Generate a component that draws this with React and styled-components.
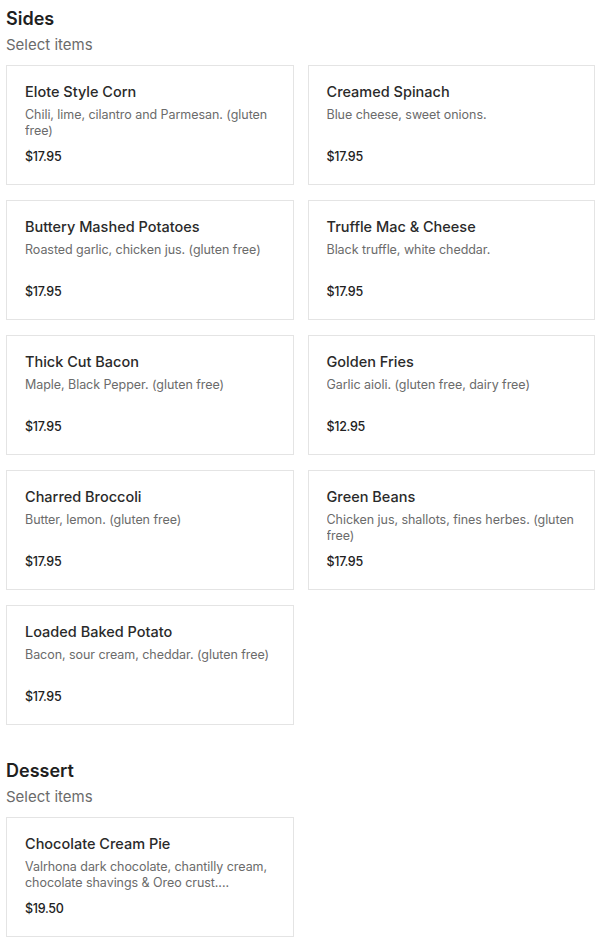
import styled, { createGlobalStyle } from 'styled-components';

const GlobalStyle = createGlobalStyle`
  body {
    margin: 0;
    background: #ffffff;
    font-family: Inter, "Liberation Sans", Arial, sans-serif;
    color: #222222;
  }
`;

const Page = styled.div`
  padding: 7px 8px 0 6px;
  display: flex;
  flex-direction: column;
  gap: 34px;
`;

const Section = styled.section`
  display: flex;
  flex-direction: column;
`;

const SectionTitle = styled.h2`
  margin: 0;
  font-size: 18px;
  line-height: 24px;
  font-weight: 600;
  color: #1f1f1f;
`;

const SectionSub = styled.div`
  font-size: 15px;
  line-height: 20px;
  color: #6b6b6b;
  margin-top: 4px;
  margin-bottom: 10px;
`;

const Grid = styled.div`
  display: grid;
  grid-template-columns: 1fr 1fr;
  column-gap: 14px;
  row-gap: 15px;
`;

const Card = styled.div`
  box-sizing: border-box;
  height: 120px;
  border: 1px solid #e4e4e4;
  padding: 16px 14px 0 18px;
  display: flex;
  flex-direction: column;
`;

const ItemName = styled.div`
  font-size: 14.5px;
  line-height: 20px;
  font-weight: 500;
  color: #2a2a2a;
`;

const ItemDesc = styled.div`
  font-size: 12.5px;
  line-height: 16px;
  color: #6b6b6b;
  margin-top: 5px;
  height: 32px;
  overflow: hidden;
  letter-spacing: -0.05px;
`;

const Price = styled.div`
  font-size: 12.5px;
  line-height: 18px;
  font-weight: 500;
  color: #222222;
  margin-top: 9px;
  letter-spacing: -0.3px;
`;

const sides = [
  ['Elote Style Corn', 'Chili, lime, cilantro and Parmesan. (gluten free)', '$17.95'],
  ['Creamed Spinach', 'Blue cheese, sweet onions.', '$17.95'],
  ['Buttery Mashed Potatoes', 'Roasted garlic, chicken jus. (gluten free)', '$17.95'],
  ['Truffle Mac & Cheese', 'Black truffle, white cheddar.', '$17.95'],
  ['Thick Cut Bacon', 'Maple, Black Pepper. (gluten free)', '$17.95'],
  ['Golden Fries', 'Garlic aioli. (gluten free, dairy free)', '$12.95'],
  ['Charred Broccoli', 'Butter, lemon. (gluten free)', '$17.95'],
  ['Green Beans', 'Chicken jus, shallots, fines herbes. (gluten free)', '$17.95'],
  ['Loaded Baked Potato', 'Bacon, sour cream, cheddar. (gluten free)', '$17.95'],
];

const desserts = [
  ['Chocolate Cream Pie', 'Valrhona dark chocolate, chantilly cream, chocolate shavings & Oreo crust....', '$19.50'],
];

function MenuSection({ title, items }) {
  return (
    <Section>
      <SectionTitle>{title}</SectionTitle>
      <SectionSub>Select items</SectionSub>
      <Grid>
        {items.map(([name, desc, price]) => (
          <Card key={name}>
            <ItemName>{name}</ItemName>
            <ItemDesc>{desc}</ItemDesc>
            <Price>{price}</Price>
          </Card>
        ))}
      </Grid>
    </Section>
  );
}

export default function App() {
  return (
    <>
      <GlobalStyle />
      <Page>
        <MenuSection title="Sides" items={sides} />
        <MenuSection title="Dessert" items={desserts} />
      </Page>
    </>
  );
}
